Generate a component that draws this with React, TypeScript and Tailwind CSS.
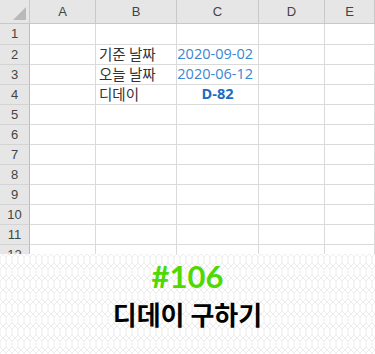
import React from "react";

const cols = ["A", "B", "C", "D", "E"];
const rows = [1, 2, 3, 4, 5, 6, 7, 8, 9, 10, 11, 12];

const cellText: Record<string, { text: string; cls: string }> = {
  "2B": { text: "기준 날짜", cls: "justify-start pl-[3px] text-[#333]" },
  "3B": { text: "오늘 날짜", cls: "justify-start pl-[3px] text-[#333]" },
  "4B": { text: "디데이", cls: "justify-start pl-[3px] text-[#333]" },
  "2C": { text: "2020-09-02", cls: "justify-end pr-[5px] text-[#3a87d2]" },
  "3C": { text: "2020-06-12", cls: "justify-end pr-[5px] text-[#3a87d2]" },
  "4C": { text: "D-82", cls: "justify-center font-bold text-[#1b6cc4]" },
};

const Pattern = () => (
  <svg className="absolute inset-0 h-full w-full" aria-hidden="true">
    <defs>
      <pattern id="zig" width="12" height="12" patternUnits="userSpaceOnUse">
        <path
          d="M0 3 L3 0 L6 3 L9 0 L12 3 M0 9 L3 12 L6 9 L9 12 L12 9 M0 3 L0 9 M6 3 L6 9 M12 3 L12 9"
          fill="none"
          stroke="#ececec"
          strokeWidth="1"
        />
      </pattern>
    </defs>
    <rect width="100%" height="100%" fill="url(#zig)" />
  </svg>
);

const App = () => {
  return (
    <div className="w-[375px] h-[354px] overflow-hidden bg-white font-['Noto_Sans_CJK_KR',sans-serif]">
      {/* sheet */}
      <div className="h-[254px] overflow-hidden">
        <div className="grid grid-cols-[30px_66px_81px_82px_66px_1fr]">
          <div className="relative h-[24px] bg-[#e6e6e6] border-r border-b border-[#c8c8c8]">
            <svg className="absolute right-[3px] bottom-[3px]" width="13" height="13" viewBox="0 0 13 13" aria-hidden="true">
              <path d="M13 0 L13 13 L0 13 Z" fill="#b9b9b9" />
            </svg>
          </div>
          {cols.map((c) => (
            <div
              key={c}
              className="flex h-[24px] items-center justify-center bg-[#e6e6e6] border-r border-b border-[#c8c8c8] text-[13px] text-[#444] font-['Liberation_Sans',sans-serif]"
            >
              {c}
            </div>
          ))}
          {rows.map((r) => (
            <React.Fragment key={r}>
              <div
                className={`flex items-center justify-center bg-[#e6e6e6] border-r border-b border-r-[#bdbdbd] border-b-[#d4d4d4] text-[13px] text-[#444] font-['Liberation_Sans',sans-serif] ${
                  r === 1 ? "h-[21px]" : "h-[20px]"
                }`}
              >
                {r}
              </div>
              {cols.map((c) => {
                const t = cellText[`${r}${c}`];
                return (
                  <div
                    key={c}
                    className={`flex items-center border-r border-b border-[#dadada] text-[14.5px] leading-none ${
                      r === 1 ? "h-[21px]" : "h-[20px]"
                    } ${t ? t.cls : ""} ${
                      c === "C" ? "font-['Open_Sans',sans-serif]" : ""
                    }`}
                  >
                    {t ? t.text : null}
                  </div>
                );
              })}
            </React.Fragment>
          ))}
        </div>
      </div>

      {/* title */}
      <div className="relative h-[100px]">
        <Pattern />
        <div className="relative flex flex-col items-center pt-[3px]">
          <div className="text-[31px] font-bold leading-[38px] text-[#4fd900] font-['Lato',sans-serif]">
            #106
          </div>
          <div className="mt-[3px] text-[26px] font-bold leading-[32px] text-black">
            디데이 구하기
          </div>
        </div>
      </div>
    </div>
  );
};

export default App;
